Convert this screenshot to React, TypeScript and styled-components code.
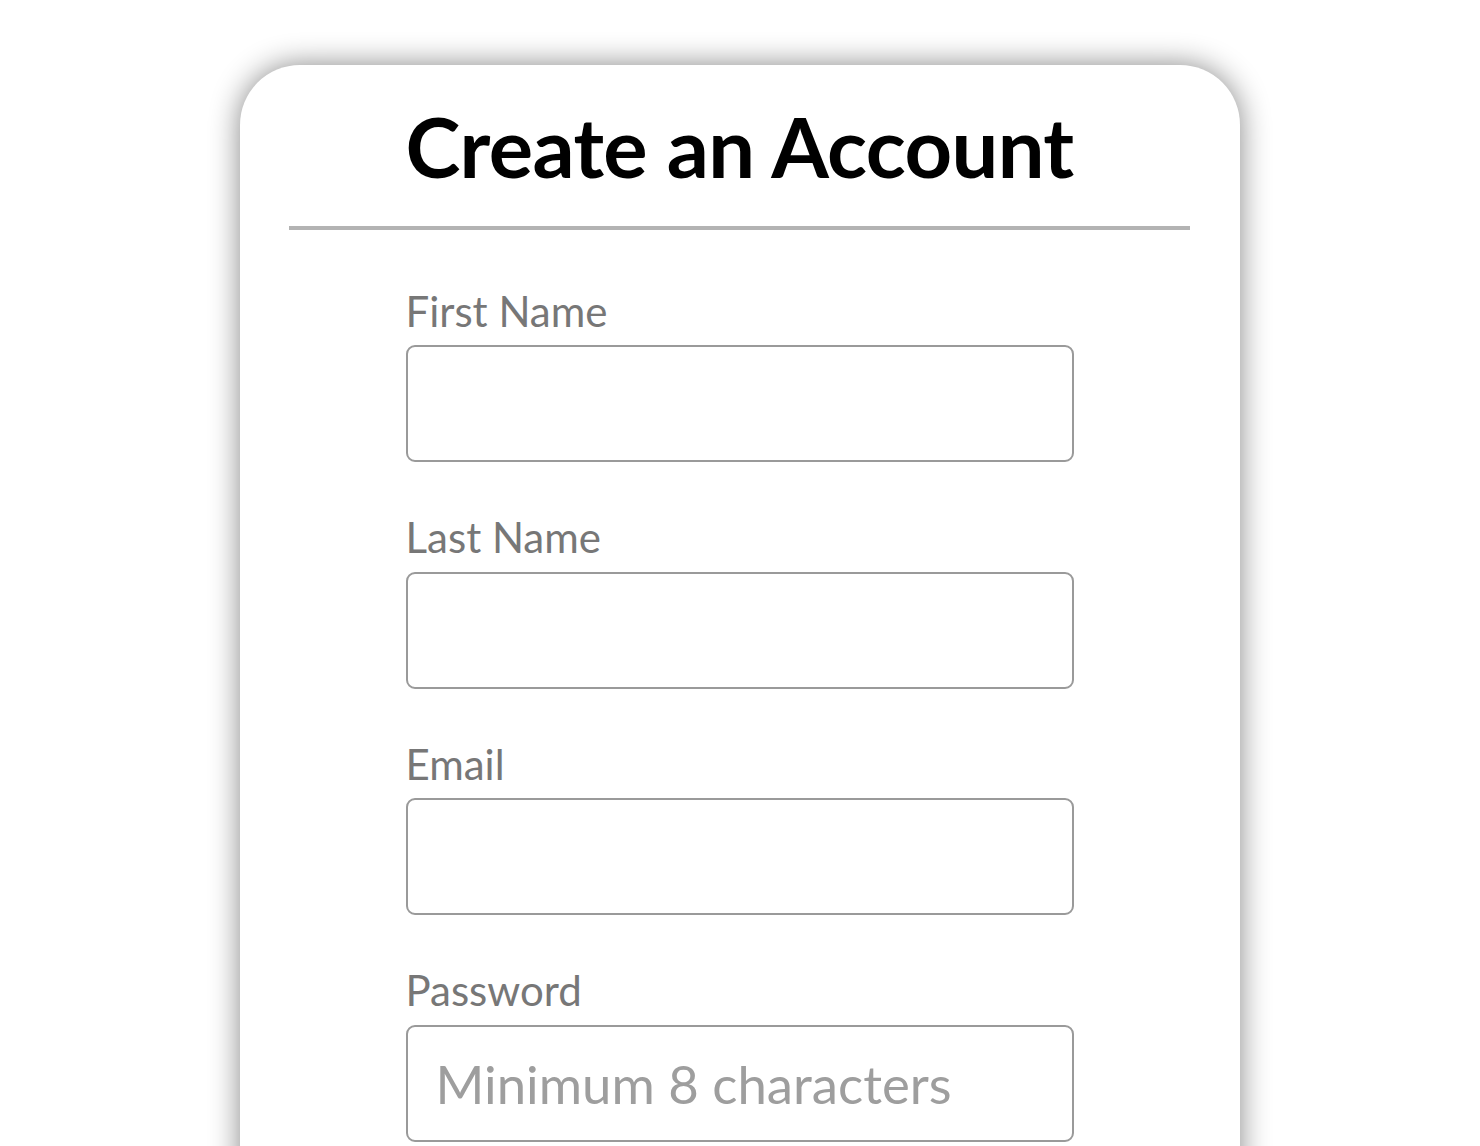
import styled, { createGlobalStyle } from 'styled-components';

const GlobalStyle = createGlobalStyle`
  html, body {
    margin: 0;
    padding: 0;
    background: #ffffff;
    font-family: Lato, "Noto Sans", sans-serif;
  }
  body {
    overflow: hidden;
  }
`;

const Page = styled.div`
  display: flex;
  justify-content: center;
  padding-top: 65px;
  min-height: 1146px;
  box-sizing: border-box;
`;

const Card = styled.div`
  width: 1000px;
  min-height: 1200px;
  box-sizing: border-box;
  padding: 0 50px 0 49px;
  background: #ffffff;
  border-radius: 60px;
  box-shadow: 0 0 30px rgba(0, 0, 0, 0.48);
`;

const Title = styled.h1`
  margin: 0;
  padding-top: 40px;
  padding-bottom: 38px;
  font-size: 83px;
  font-weight: 700;
  line-height: 1;
  text-align: center;
  color: #000000;
  letter-spacing: -0.6px;
  border-bottom: 4px solid #b3b3b3;
`;

const Form = styled.form`
  width: 668px;
  margin: 0 auto;
  padding-top: 56px;
  display: flex;
  flex-direction: column;
  gap: 50px;
`;

const Field = styled.label`
  display: flex;
  flex-direction: column;
  gap: 9px;
`;

const LabelText = styled.span`
  font-size: 42px;
  line-height: 1.2;
  color: #777777;
`;

const Input = styled.input`
  height: 117px;
  box-sizing: border-box;
  padding: 0 28px;
  border: 2.5px solid #9a9a9a;
  border-radius: 9px;
  font-family: Lato, "Noto Sans", sans-serif;
  font-size: 52.7px;
  color: #333333;
  background: #ffffff;
  outline: none;

  &::placeholder {
    color: #9e9e9e;
  }
`;

const fields = [
  { label: 'First Name', type: 'text' },
  { label: 'Last Name', type: 'text' },
  { label: 'Email', type: 'email' },
  { label: 'Password', type: 'password', placeholder: 'Minimum 8 characters' },
];

export default function App() {
  return (
    <>
      <GlobalStyle />
      <Page>
        <Card>
          <Title>Create an Account</Title>
          <Form>
            {fields.map((f) => (
              <Field key={f.label}>
                <LabelText>{f.label}</LabelText>
                <Input type={f.type} placeholder={f.placeholder} />
              </Field>
            ))}
          </Form>
        </Card>
      </Page>
    </>
  );
}
